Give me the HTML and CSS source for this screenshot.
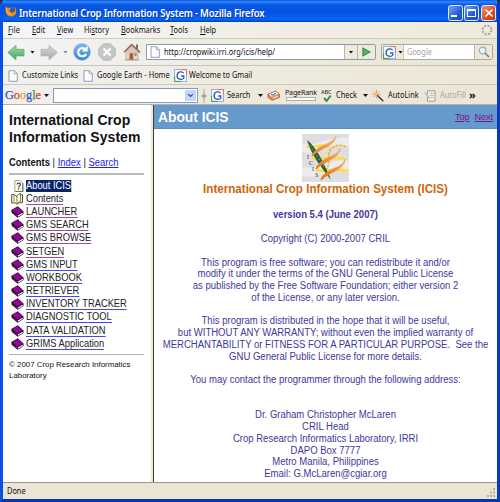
FILE: index.html
```html
<!DOCTYPE html>
<html lang="en">
<head>
<meta charset="utf-8">
<title>International Crop Information System</title>
<link rel="stylesheet" href="styles.css">
</head>
<body>
<svg width="0" height="0" class="defs">
  <defs>
    <linearGradient id="green" x1="0" y1="0" x2="0" y2="1"><stop offset="0" stop-color="#a4dda8"/><stop offset="1" stop-color="#3fa65c"/></linearGradient>
    <linearGradient id="gray" x1="0" y1="0" x2="0" y2="1"><stop offset="0" stop-color="#d6d6d6"/><stop offset="1" stop-color="#a9a9a9"/></linearGradient>
    <linearGradient id="blue" x1="0" y1="0" x2="0" y2="1"><stop offset="0" stop-color="#82b8ee"/><stop offset="1" stop-color="#3383d6"/></linearGradient>
    <linearGradient id="orange" x1="1" y1="0" x2="0" y2="1"><stop offset="0" stop-color="#f6c58c"/><stop offset="1" stop-color="#d96800"/></linearGradient>
    <symbol id="page" viewBox="0 0 10 12"><path d="M1 .7h5.5l2.8 2.8v7.8H1z" fill="#fbfcff" stroke="#8d93ab" stroke-width=".9"/><path d="M6.3.8v3h3" fill="#dfe3ef" stroke="#8d93ab" stroke-width=".7"/></symbol>
    <symbol id="book" viewBox="0 0 13 12"><path d="M.3 3.9 6.8.3l5.7 5.2v2.6L6.7 11.7.8 7z" fill="#26002a"/><path d="M1 3.9 6.6.8l5.1 4.7-5.3 3.2z" fill="#8a0c91"/><path d="m6.8 10.2 4.9-2.9" stroke="#fff" stroke-width="1.2"/><path d="m1.8 6.6 4.3 3.4" stroke="#9b649d" stroke-width=".5"/></symbol>
    <symbol id="gbox" viewBox="0 0 13 13"><rect x=".6" y=".6" width="11.8" height="11.8" fill="#fff" stroke="#92acd8"/><path d="M.6 7v5.4h6" fill="none" stroke="#38a060"/><path d="M7 .6h5.4V6" fill="none" stroke="#de776a"/><path d="M9.6 4.2C8.7 2.3 3.3 2 3.1 6.4c-.1 4.5 5.2 4.7 6.7 2.8V7H7.1" fill="none" stroke="#2b58b9" stroke-width="1.3"/></symbol>
  </defs>
</svg>
<div class="window">
  <header class="titlebar">
    <svg class="fox" viewBox="0 0 12 12"><circle cx="6.2" cy="5.8" r="4.3" fill="#335caf"/><path d="M.7 1.3 3 3C4 2 5.3 2.4 6 3L4.7 4.5c-.8 3 2.8 4 4.8 2.2C10.6 5.4 10 3 8.8 1.6c2.6 1.2 3.5 5.5 1.5 7.8-2.6 3.2-7.6 2.3-9-.9C.2 6 .3 3.2.7 1.3Z" fill="#f28a18"/><path d="M1.5 3c-.3 4 2 6.2 5 6" fill="none" stroke="#ffd24a" stroke-width=".8"/></svg>
    <h1>International Crop Information System - Mozilla Firefox</h1>
    <div class="winbtn"><i class="min"></i></div>
    <div class="winbtn"><i class="max"></i></div>
    <div class="winbtn close"><svg viewBox="0 0 10 10"><path d="m1.5 1.5 7 7m0-7-7 7" stroke="#fff" stroke-width="1.7"/></svg></div>
  </header>

  <nav class="menu">
    <span class="ui m1"><u>F</u>ile</span><span class="ui m2"><u>E</u>dit</span><span class="ui m3"><u>V</u>iew</span><span class="ui m4">Hi<u>s</u>tory</span><span class="ui m5"><u>B</u>ookmarks</span><span class="ui m6"><u>T</u>ools</span><span class="ui"><u>H</u>elp</span>
    <svg class="throb" viewBox="0 0 12 12"><circle cx="6" cy="6" r="4.4" fill="none" stroke="#aaa9a0" stroke-width="2" stroke-dasharray="2.2 1.255"/></svg>
  </nav>

  <div class="navbar">
    <svg class="arrow" viewBox="0 0 18 17"><path d="M.8 8.5 9 1.3v4h8v6.6H9v4z" fill="url(#green)" stroke="#67a874" stroke-width=".8"/></svg>
    <i class="caret c1"></i>
    <svg class="arrow" viewBox="0 0 18 17"><path d="M17.2 8.5 9 1.3v4H1v6.6h8v4z" fill="url(#gray)" stroke="#b4b4b4" stroke-width=".8"/></svg>
    <i class="caret c2 dim"></i>
    <svg class="round r1" viewBox="0 0 18 18"><circle cx="9" cy="9" r="8.3" fill="url(#blue)" stroke="#5b9ee2" stroke-width=".6"/><path d="M13 10.8c-1.2 3.6-7.2 3.3-7.8-1-.4-4 4-6 6.7-3.5" fill="none" stroke="#fff" stroke-width="2.1"/><path d="M14.7 2.5v6H8.8z" fill="#fff"/></svg>
    <svg class="round r2" viewBox="0 0 18 18"><path d="M5.6.8h6.8l4.8 4.8v6.8l-4.8 4.8H5.6L.8 12.4V5.6z" fill="#c7c7c7" stroke="#b8b8b8"/><path d="m5.5 5.5 7 7m0-7-7 7" stroke="#fff" stroke-width="2.2"/></svg>
    <svg class="round r3" viewBox="0 0 18 18"><path d="M13 1.5h2v5h-2z" fill="#9a6554"/><path d="M3 9h12v8H3z" fill="#e7d7c4" stroke="#a79c91" stroke-width=".6"/><path d="m1 9.3 7.7-7.6L17 9.3" fill="#d9c8b5" stroke="#956b60" stroke-width="1.6"/><path d="M6.5 10.3h3.7V17H6.5z" fill="#b2543e"/><path d="M11.4 10h2.2v3h-2.2z" fill="#7699bd"/><path d="M2 16.8h14" stroke="#99a483"/></svg>
    <div class="url">
      <svg class="pageicon" viewBox="0 0 10 12"><use href="#page"/></svg>
      <span class="ui address">http://cropwiki.irri.org/icis/help/</span>
      <span class="drop"><i class="caret"></i></span>
      <span class="go"><svg viewBox="0 0 9 10"><path d="m.8.8 7.5 4.1L.8 9.2z" fill="#4fb26b" stroke="#2b8146" stroke-width=".8"/></svg></span>
    </div>
    <div class="search">
      <span class="engine"><svg viewBox="0 0 13 13"><use href="#gbox"/></svg><i class="caret"></i></span>
      <span class="ui hint">Google</span>
      <span class="lens"><svg viewBox="0 0 12 12"><circle cx="4.6" cy="4.5" r="3.3" fill="#e8f2fa" stroke="#9caab7" stroke-width="1.2"/><path d="m7.2 7.1 3.9 4" stroke="#8c8c8b" stroke-width="1.8"/></svg></span>
    </div>
  </div>

  <div class="bookmarks">
    <svg class="pageicon" viewBox="0 0 10 12"><use href="#page"/></svg><span class="ui b1">Customize Links</span>
    <svg class="pageicon" viewBox="0 0 10 12"><use href="#page"/></svg><span class="ui b2">Google Earth - Home</span>
    <svg class="gicon" viewBox="0 0 13 13"><use href="#gbox"/></svg><span class="ui">Welcome to Gmail</span>
  </div>

  <div class="gbar">
    <span class="logo"><i class="lb">G</i><i class="lr">o</i><i class="ly">o</i><i class="lb">g</i><i class="lg">l</i><i class="lr">e</i></span>
    <i class="caret g1"></i>
    <div class="combo"><span><svg viewBox="0 0 8 6"><path d="m1.2 1.3 2.8 2.8 2.8-2.8" fill="none" stroke="#345184" stroke-width="1.5"/></svg></span></div>
    <svg class="split" viewBox="0 0 6 14"><path d="M3 0v14" stroke="#aaa79a"/><path d="m0 7 3-2.5L6 7 3 9.5z" fill="#aaa79a"/></svg>
    <svg class="gicon" viewBox="0 0 13 13"><use href="#gbox"/></svg>
    <span class="ui t-search">Search</span><i class="caret g2"></i>
    <svg class="mail" viewBox="0 0 13 11"><path d="M.7 4.3 8.5.8l4 3.2v3.4L5 10.4.9 7.6z" fill="#d9864f" stroke="#a86a43" stroke-width=".7"/><path d="M2 4.5 8.5 1.6l2.7 2.2-6.3 3z" fill="#fff"/><path d="m4 4.7 2.5.4L8.7 2.8" fill="none" stroke="#4979b7" stroke-width="1.3"/><path d="m5.8 8.4 5.2-2.3" stroke="#fff" stroke-width="1"/></svg>
    <div class="rank"><span>PageRank</span><i></i></div>
    <div class="abc"><span>ABC</span><svg viewBox="0 0 9 7"><path d="m1 3 2.6 3L7.6.7" fill="none" stroke="#329647" stroke-width="2"/></svg></div>
    <span class="ui t-check">Check</span><i class="caret g3"></i>
    <svg class="wand" viewBox="0 0 12 12"><path d="m5 5 6.3 6.2" stroke="#333" stroke-width="1.4"/><path d="M4.5.2v8M.4 4.3h8M1.7 1.3l5.7 5.6M7.4 1.3 1.8 7" stroke="#f05a3b" stroke-width=".8" stroke-dasharray="1.6 .6"/><circle cx="4.5" cy="4.3" r="1.1" fill="#ffe469"/></svg>
    <span class="ui t-link">AutoLink</span>
    <svg class="fill" viewBox="0 0 12 12"><path d="M3.5.8H11v10.4H3.5z" fill="#f7f5eb" stroke="#9b9b92"/><path d="M5.5 3.3h4M5.5 5.3h4M6.5 7.3h3" stroke="#bbb9ae"/><path d="m.8 2.5 5 6" stroke="#c4c2b8" stroke-width="1.8"/></svg>
    <span class="ui t-fill">AutoFill</span><b class="more">»</b>
  </div>

  <main class="content">
    <aside class="side">
      <h2>International Crop<br>Information System</h2>
      <p class="tabs"><span><b>Contents</b> | <a>Index</a> | <a>Search</a></span></p>
      <ul>
        <li class="sel"><svg viewBox="0 0 13 13"><path d="M2.5.6h6l2.6 2.6v9.2H2.5z" fill="#ffffd2" stroke="#888a75" stroke-width=".8"/><path d="M11.3 3.5v9.2H3" fill="none" stroke="#333" stroke-width=".7"/><path d="M5 4.9C5 2.8 8.7 2.8 8.6 5c0 1.3-1.9 1.5-1.9 3M6.7 9v1.4" fill="none" stroke="#2230c5" stroke-width="1.3"/></svg><a>About ICIS</a></li>
        <li class="open"><svg viewBox="0 0 13 12"><path d="M.7 1.8c2.1-.7 3.5-.1 5.1 2 .7-2 2.2-3.3 3.7-3.2v1.2h2v7.9H8.2L6 11.3 4.1 9.9H.7z" fill="#ffffd9" stroke="#3c3b23" stroke-width=".9"/><path d="M5.9 3.7v7M9.5 1.8v6.6L6.4 10M3 1.7v7" stroke="#6a6949" stroke-width=".8" fill="none"/></svg><a>Contents</a></li>
        <li class="seen"><svg viewBox="0 0 13 12"><use href="#book"/></svg><a>LAUNCHER</a></li>
        <li class="seen"><svg viewBox="0 0 13 12"><use href="#book"/></svg><a>GMS SEARCH</a></li>
        <li class="seen"><svg viewBox="0 0 13 12"><use href="#book"/></svg><a>GMS BROWSE</a></li>
        <li class="seen"><svg viewBox="0 0 13 12"><use href="#book"/></svg><a>SETGEN</a></li>
        <li><svg viewBox="0 0 13 12"><use href="#book"/></svg><a>GMS INPUT</a></li>
        <li><svg viewBox="0 0 13 12"><use href="#book"/></svg><a>WORKBOOK</a></li>
        <li><svg viewBox="0 0 13 12"><use href="#book"/></svg><a>RETRIEVER</a></li>
        <li><svg viewBox="0 0 13 12"><use href="#book"/></svg><a>INVENTORY TRACKER</a></li>
        <li><svg viewBox="0 0 13 12"><use href="#book"/></svg><a>DIAGNOSTIC TOOL</a></li>
        <li><svg viewBox="0 0 13 12"><use href="#book"/></svg><a>DATA VALIDATION</a></li>
        <li><svg viewBox="0 0 13 12"><use href="#book"/></svg><a>GRIMS Application</a></li>
      </ul>
      <p class="foot">© 2007 Crop Research Informatics<br>Laboratory</p>
    </aside>
    <article class="doc">
      <div class="dochead"><h2>About ICIS</h2><a>Top</a><a class="next">Next</a></div>
      <svg class="icis" viewBox="0 0 47 48">
        <rect width="47" height="48" fill="#dedee0"/>
        <path d="M0 9C15 14 27 1 47 4v9C28 8 16 22 0 18zM0 33c18 4 29-10 47-6v9C30 32 18 46 0 42z" fill="#ececee"/>
        <path d="M5 12c3 2 7 1 11 0s8 0 12 1M10 24c4 2 9 1 14 0s12 0 18 1M14 36c4 2 9 1 14 0s12 0 18 1" fill="none" stroke="#ffdc4a" stroke-width="2.8"/>
        <path d="M44 13C37 9 28 12 27 20c-1 6 1 11-3 16" fill="none" stroke="#f0b728" stroke-width="1.7" stroke-dasharray="3 1"/>
        <path d="M5 6c8 6 16 20 24 40C19 33 10 22 5 6Z" fill="#285e38"/><path d="m8 11 14 22" stroke="#7db17d" stroke-width="1" stroke-dasharray="2 2"/>
        <path d="M34 2c0 8-20 9-24 20 7-8 23-10 24-20ZM38 14c0 9-20 9-24 21 7-8 23-10 24-21ZM43 25c0 10-20 9-24 21 7-8 23-10 24-21Z" fill="url(#orange)" stroke="url(#orange)" stroke-width="1.3"/>
        <g class="initials"><text x="5" y="25">I</text><text x="7" y="31">C</text><text x="10" y="37">I</text><text x="13" y="43">S</text></g>
      </svg>
      <h3>International Crop Information System (ICIS)</h3>
      <h4>version 5.4 (June 2007)</h4>
      <p>Copyright (C) 2000-2007 CRIL</p>
      <p>This program is free software; you can redistribute it and/or<br>modify it under the terms of the GNU General Public License<br>as published by the Free Software Foundation; either version 2<br>of the License, or any later version.</p>
      <p>This program is distributed in the hope that it will be useful,<br>but WITHOUT ANY WARRANTY; without even the implied warranty of<br>MERCHANTABILITY or FITNESS FOR A PARTICULAR PURPOSE.&nbsp; See the<br>GNU General Public License for more details.</p>
      <p>You may contact the programmer through the following address:</p>
      <p class="addr">Dr. Graham Christopher McLaren<br>CRIL Head<br>Crop Research Informatics Laboratory, IRRI<br>DAPO Box 7777<br>Metro Manila, Philippines<br>Email: G.McLaren@cgiar.org</p>
    </article>
  </main>

  <footer class="status"><span class="ui">Done</span><svg viewBox="0 0 10 10"><g fill="#b5b09f"><path d="M7 0h2v2H7zM4 3.5h2v2H4zM7 3.5h2v2H7zM1 7h2v2H1zM4 7h2v2H4zM7 7h2v2H7z"/></g></svg></footer>
</div>
</body>
</html>
```
FILE: styles.css
```css
* { box-sizing: border-box; }
body { margin: 0; background: #1b3c1b; font: 8.5px/1 "Noto Sans", sans-serif; color: #111; }
.defs { display: block; }
h1, h2, h3, h4, p, ul { margin: 0; padding: 0; }
svg { display: block; flex: none; }
span { white-space: nowrap; }
/* condensed interface lettering */
.ui { flex: none; transform: scaleX(.87); transform-origin: left center; }

.window {
  display: flex; flex-direction: column; width: 500px; height: 502px;
  border: solid #0751e8; border-width: 0 3px 3px; border-right-color: #0739c2; border-bottom-color: #0534c0;
  border-radius: 5px 5px 0 0; background: #eeeadd; overflow: hidden;
}
.titlebar {
  display: flex; align-items: center; flex: none; height: 22px; margin: 0 -3px; padding: 3px 4px 0 5px;
  background: linear-gradient(#0a4fd6, #2f86fb 8%, #0757e2 22%, #0553e0 55%, #0665fb 88%, #043fc2);
  color: #fff;
}
.fox { width: 12px; height: 12px; margin-top: -3px; }
.titlebar h1 { flex: 1; margin-left: 2px; font: 600 10px/14px "Noto Sans", sans-serif; letter-spacing: -.22px; white-space: nowrap; text-shadow: 1px 1px #0538a0; transform: scaleX(.955); transform-origin: left; }
.winbtn { width: 15px; height: 16px; margin-left: 1.5px; border: 1px solid #dce9ff; border-radius: 2.5px; background: linear-gradient(135deg, #7ba6f8, #2659dc 60%, #1c49c4); display: flex; align-items: center; justify-content: center; }
.winbtn.close { background: linear-gradient(135deg, #f1906d, #dc4d23 60%, #bd3710); margin-left: 2px; }
.winbtn svg { width: 10px; height: 10px; }
.min { width: 6px; height: 2px; background: #fff; margin: 7px 3px 0 0; }
.max { width: 9px; height: 8px; border: 1px solid #fff; border-top-width: 2px; }

.menu { display: flex; align-items: center; flex: none; height: 17px; padding: 0 4px 0 5px; border-bottom: 1px solid #cfccc0; background: linear-gradient(90deg, #f5f6fb, #f0eee5 50%, #eeeadc); }
.menu u { text-decoration-thickness: .7px; text-underline-offset: 1px; }
.m1 { width: 24px; } .m2 { width: 25px; } .m3 { width: 27px; } .m4 { width: 37px; } .m5 { width: 49px; } .m6 { width: 30px; }
.throb { width: 12px; height: 12px; margin-left: auto; }

.caret { flex: none; width: 5px; height: 3px; background: #111; clip-path: polygon(0 0, 100% 0, 50% 100%); }
.dim { background: #888; }
.navbar { display: flex; align-items: center; flex: none; height: 27px; padding: 0 3px 0 4px; border-bottom: 1px solid #c7c3b6; background: linear-gradient(90deg, #f3f4f7, #eeebdf 45%, #eae6d4); }
.arrow { width: 18px; height: 17px; }
.c1 { margin: 0 5px 0 5px; } .c2 { margin: 0 5px 0 5px; }
.round { width: 18px; height: 18px; } .r2 { margin-left: 7px; } .r3 { margin-left: 7px; }
.url { display: flex; align-items: center; width: 230px; height: 16px; margin-left: 5px; border: 1px solid #8d9bb0; border-radius: 0 2px 2px 0; background: #fff; }
.pageicon { width: 10px; height: 12px; }
.url .pageicon { margin-left: 3px; }
.address { flex: 1; margin-left: 4px; }
.drop, .go, .lens { display: flex; align-items: center; justify-content: center; height: 14px; border-left: 1px solid #b5b5a8; background: #edeadd; }
.drop { width: 13px; } .go { width: 18px; }
.go svg { width: 9px; height: 10px; }
.search { display: flex; align-items: center; width: 112px; height: 16px; margin-left: 5px; border: 1px solid #a5a99e; border-radius: 2px; background: #fff; }
.engine { display: flex; align-items: center; width: 22px; height: 14px; padding-left: 1px; background: #edeadd; border-right: 1px solid #c9c6b8; }
.engine svg { width: 13px; height: 13px; margin-right: 2px; }
.hint { flex: 1; margin-left: 3px; color: #a5a5a5; }
.lens { width: 18px; } .lens svg { width: 12px; height: 12px; }

.bookmarks { display: flex; align-items: center; flex: none; height: 19px; padding: 1px 0 0 5px; border-bottom: 1px solid #cbc7ba; background: linear-gradient(90deg, #f1f1f1, #eeeadd 55%, #ece7d8); }
.bookmarks span { margin-left: 4px; }
.bookmarks .b1 { width: 61px; } .bookmarks .b2 { width: 77px; }
.gicon { width: 13px; height: 13px; }
.bookmarks .gicon + span { margin-left: 2px; }

.gbar { display: flex; align-items: center; flex: none; height: 20px; padding: 2px 0 0 2px; border-bottom: 1px solid #b5b1a4; background: linear-gradient(90deg, #f1f0ed, #eeeadd 40%, #ece5d8); }
.logo { width: 36px; font: 13px/14px "Liberation Serif", serif; margin-top: -2px; -webkit-text-stroke: .25px; transform: scaleX(.94); transform-origin: left; }
.logo i { font-style: normal; }
.lb { color: #2859c7; } .lr { color: #d63d2d; } .ly { color: #e2a40c; } .lg { color: #2c9a49; }
.g1 { margin: 0 4px 0 3px; } .g2 { margin: 0 4px 0 5px; } .g3 { margin: 0 4px 0 4px; }
.combo { display: flex; justify-content: flex-end; width: 145px; height: 15px; padding: 1px; border: 1px solid #819dc5; background: #fff; }
.combo span { display: flex; align-items: center; justify-content: center; width: 11px; background: #c5d6fa; }
.combo svg { width: 7px; height: 5px; }
.split { width: 6px; height: 14px; margin: 0 4px 0 3px; }
.t-search { width: 27px; margin-left: 3px; margin-right: -1px; }
.mail { width: 13px; height: 11px; }
.rank { width: 32px; margin-left: 5px; margin-top: -2px; }
.rank span { display: block; font-size: 7px; letter-spacing: -.12px; line-height: 8px; }
.rank i { display: block; width: 30px; height: 4px; margin-left: 1px; border: 1px solid #a7b2a5; background: #fff; }
.abc { width: 12px; margin-left: 4px; margin-top: -1px; }
.abc span { display: block; font-size: 5.5px; line-height: 6px; }
.abc svg { width: 9px; height: 7px; margin-left: 2px; }
.t-check { width: 22px; margin-left: 3px; margin-right: 1px; }
.wand { width: 12px; height: 12px; }
.t-link { width: 32px; margin-left: 4px; }
.fill { width: 12px; height: 12px; margin-left: 4px; }
.t-fill { width: 26px; margin-left: 4px; color: #aaa79e; }
.more { margin-left: 3px; margin-top: -2px; font-size: 11px; }

.content { display: flex; flex: 1; min-height: 0; background: #fff; font-family: "Liberation Sans", sans-serif; }
.side { width: 151px; flex: none; padding: 7px 8px 0 6px; border-right: 1px solid #443c30; box-shadow: inset -2px 0 #ece9d8; }
.side h2 { font-size: 14px; line-height: 16.5px; letter-spacing: .04px; white-space: nowrap; }
.tabs { padding: 12px 0 4px; border-bottom: 2px solid #b9b9b9; font-size: 10px; line-height: 12px; width: 135px; }
.tabs span { display: block; transform: scaleX(.945); transform-origin: left; }
.tabs a { color: #2424e8; text-decoration: underline; }
.side ul { width: 135px; padding: 4px 0 4px 3px; border-bottom: 1.5px solid #b2b2b2; list-style: none; }
.side li { display: flex; align-items: center; height: 13.2px; font-size: 10.3px; white-space: nowrap; }
.side li svg { width: 13px; height: 12px; margin: 0 2px 0 -1px; }
.side li.sel svg { margin: 0 1px 0 0; }
.side li a { line-height: 11px; border-bottom: 1px solid #4646f0; color: #222; transform: scaleX(.905); transform-origin: left; }
.side .open a, .side .seen a { border-color: #a04aa6; }
.side .sel a { background: #0a246a; color: #fff; border-color: #0a246a; }
.foot { padding-top: 5px; font-size: 8px; line-height: 10.7px; white-space: nowrap; transform: scaleX(.985); transform-origin: left; }

.doc { flex: 1; text-align: center; color: #40389b; font-size: 10px; line-height: 11.75px; white-space: nowrap; }
.dochead { display: flex; align-items: center; height: 24px; padding: 2px 4px 0 4px; background: #6699cc; border-bottom: 1px solid #5a8cc0; }
.dochead h2 { flex: 1; text-align: left; color: #fff; font-size: 13.8px; }
.dochead a { color: #7b1290; font-size: 9.2px; letter-spacing: -.1px; text-decoration: underline; }
.dochead .next { margin-left: 5px; }
.icis { width: 47px; height: 48px; margin: 5px auto 0; }
.initials { font: 6px "Liberation Serif", serif; fill: #333; }
.doc h3 { color: #cc6608; font-size: 12px; line-height: 14px; transform: scaleX(.966); }
.doc h4 { margin: 13px 0 12px; font-size: 10px; line-height: 12px; transform: scaleX(.953); }
.doc p { margin-bottom: 11.75px; transform: scaleX(.953); }
.doc .addr { margin-top: 23.5px; }

.status { display: flex; align-items: center; justify-content: space-between; flex: none; height: 17px; padding: 0 1px 0 4px; border-top: 1px solid #98968c; background: #ece5d5; }
.status svg { width: 10px; height: 10px; margin-top: 4px; }
```
